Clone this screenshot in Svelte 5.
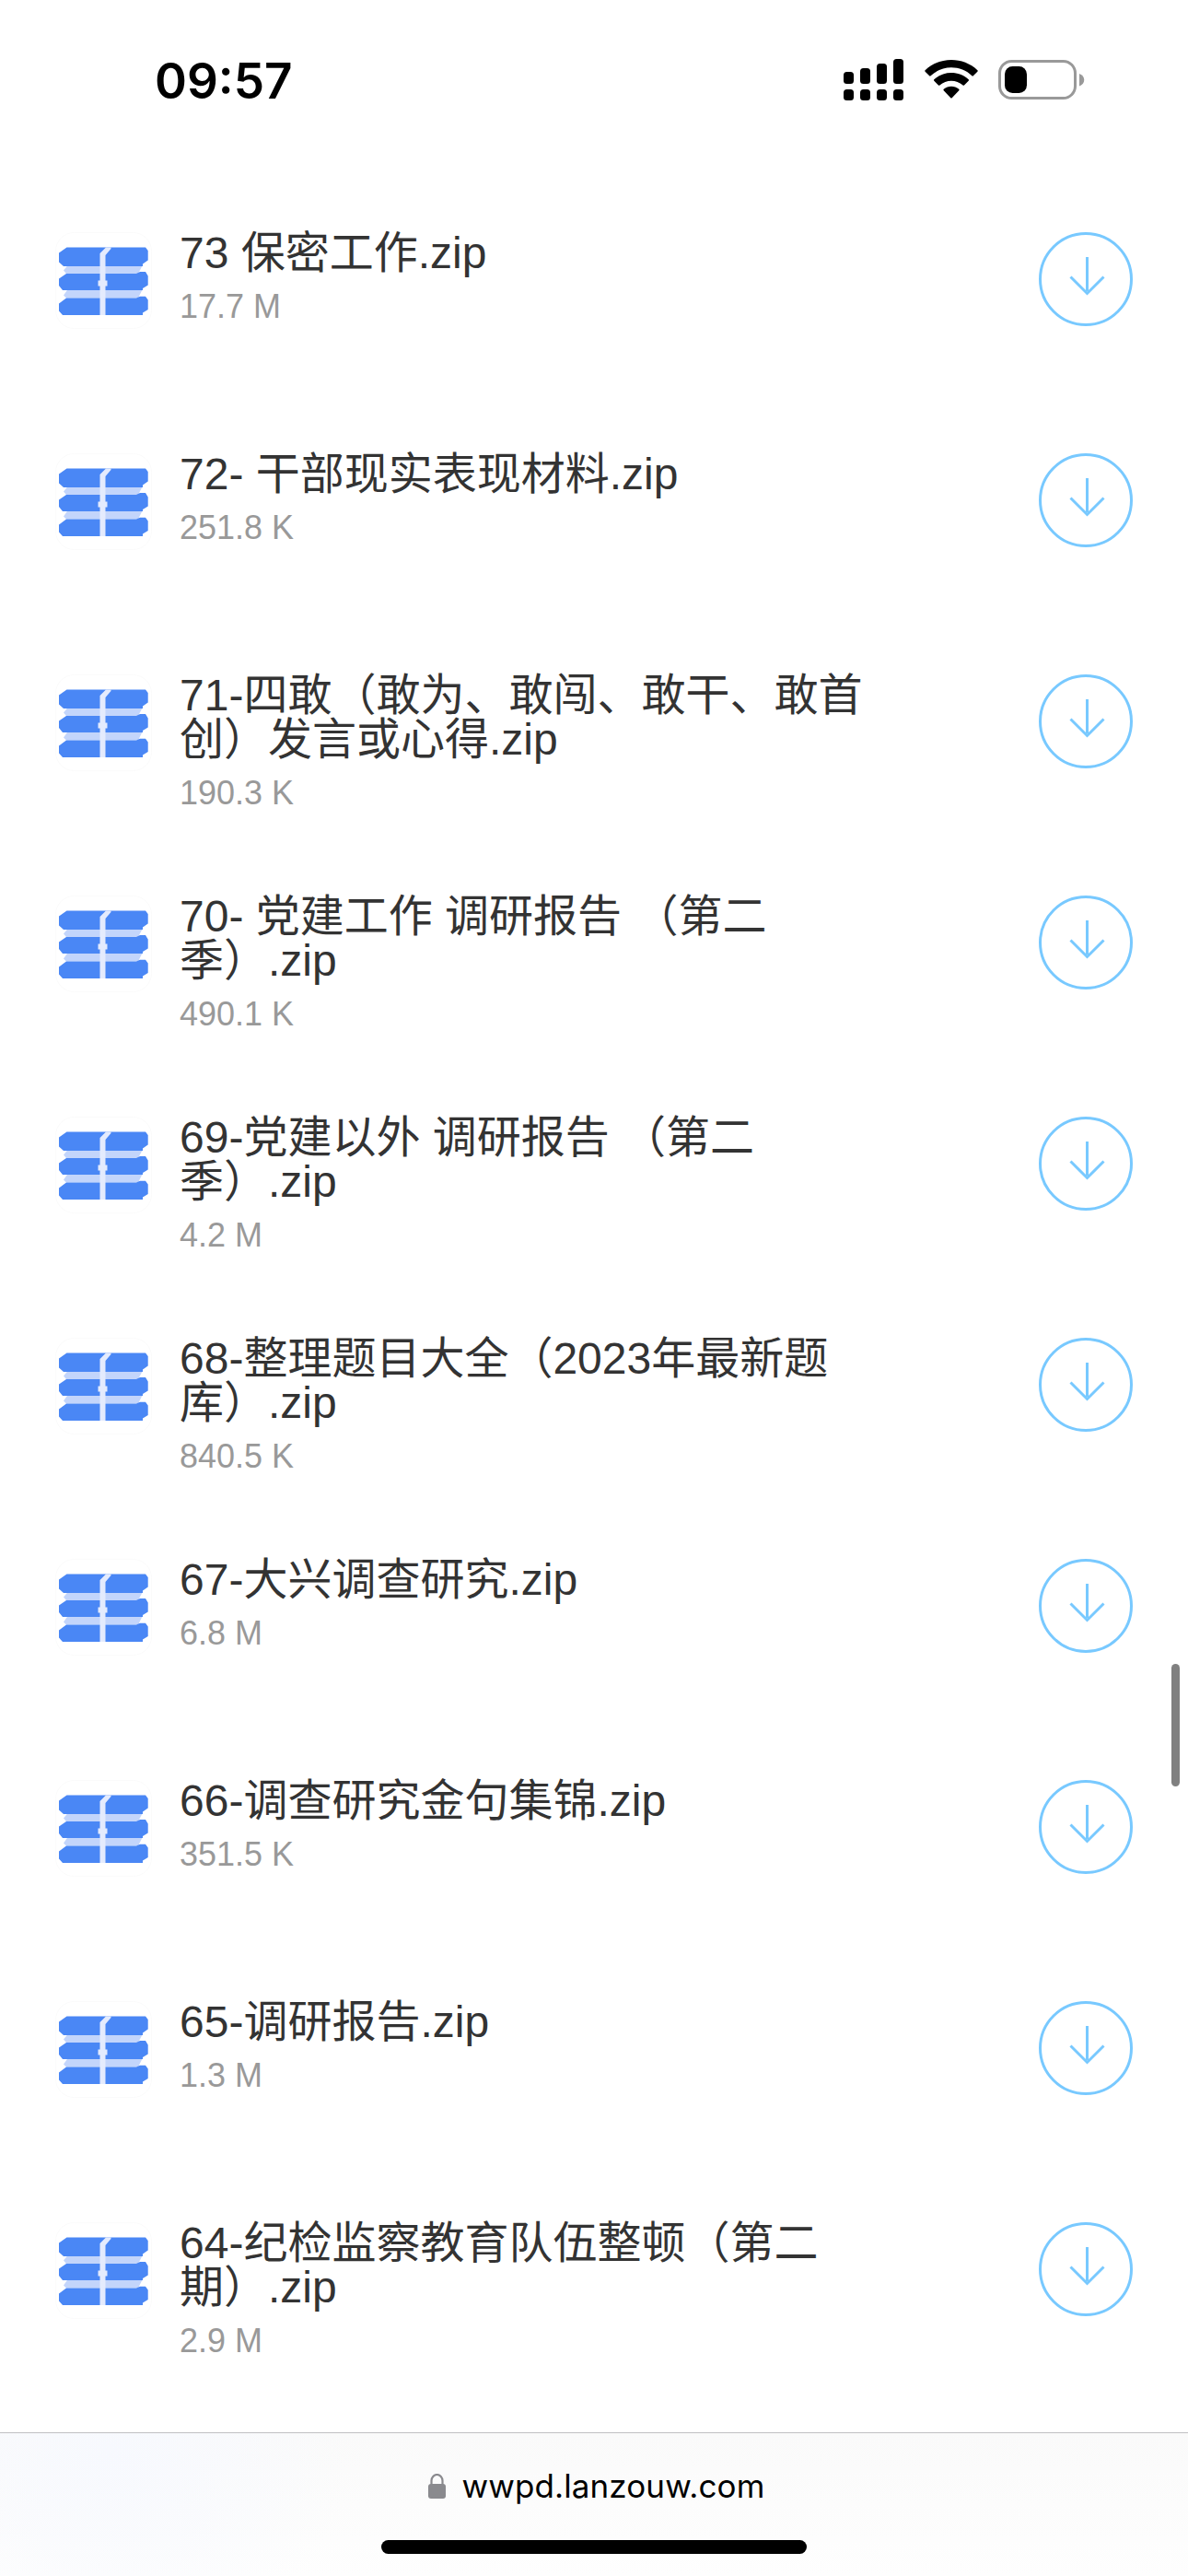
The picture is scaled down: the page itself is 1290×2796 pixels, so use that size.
<script lang="ts">
type FileItem = {
    name: string;
    size: string;
};

// "\n" marks where a long name breaks onto its second line
const files: FileItem[] = [
    { name: "73 保密工作.zip", size: "17.7 M" },
    { name: "72- 干部现实表现材料.zip", size: "251.8 K" },
    { name: "71-四敢（敢为、敢闯、敢干、敢首\n创）发言或心得.zip", size: "190.3 K" },
    { name: "70- 党建工作 调研报告 （第二\n季）.zip", size: "490.1 K" },
    { name: "69-党建以外 调研报告 （第二\n季）.zip", size: "4.2 M" },
    { name: "68-整理题目大全（2023年最新题\n库）.zip", size: "840.5 K" },
    { name: "67-大兴调查研究.zip", size: "6.8 M" },
    { name: "66-调查研究金句集锦.zip", size: "351.5 K" },
    { name: "65-调研报告.zip", size: "1.3 M" },
    { name: "64-纪检监察教育队伍整顿（第二\n期）.zip", size: "2.9 M" },
];

const signalTops = [14, 10, 5, 0];
</script>

<div class="screen">
    <header class="status">
        <span class="time">09:57</span>
        <div class="indicators">
            <svg class="signal" width="65" height="45" viewBox="0 0 65 45">
                {#each signalTops as top, i}
                    <rect x={i * 18} y={top} width="11" height={27 - top} rx="3.5" />
                    <rect x={i * 18} y="33" width="11" height="12" rx="3.5" />
                {/each}
            </svg>
            <svg class="wifi" width="58" height="43" viewBox="0 0 58 43">
                <path d="M.6 12.7a1 1 0 0 1 0-1.4C16-3.7 42-3.7 57.4 11.3a1 1 0 0 1 0 1.4l-4.6 4.6a1 1 0 0 1-1.4 0C39.5 5.3 18.5 5.3 6.6 17.3a1 1 0 0 1-1.4 0z" />
                <path d="M10.3 22.7a1 1 0 0 1 0-1.4c10.4-9.7 27-9.7 37.4 0a1 1 0 0 1 0 1.4l-4.7 4.8a1 1 0 0 1-1.4 0c-7.2-6.5-18-6.5-25.2 0a1 1 0 0 1-1.4 0z" />
                <path d="M20.7 33.2a1 1 0 0 1 0-1.4c4.8-4 11.8-4 16.6 0a1 1 0 0 1 0 1.4l-7.6 8a1 1 0 0 1-1.4 0z" />
            </svg>
            <svg class="battery" width="94" height="43" viewBox="0 0 94 43">
                <rect x="1.5" y="1.5" width="82" height="40" rx="13" fill="none" stroke="#999" stroke-width="3" />
                <rect x="7" y="7" width="24" height="29" rx="8.5" />
                <path d="M88 15v13.5c7-2.5 7-11 0-13.5z" fill="#999" />
            </svg>
        </div>
    </header>

    <ul class="files">
        {#each files as file}
            <li class="file">
                <svg class="zip" width="105" height="105" viewBox="0 0.4 105 105">
                    <rect x=".5" y=".9" width="104" height="104" rx="20" fill="none" stroke="#fbfbfb" />
                    <g fill="#c3d5fb">
                        <path d="M14 36H95L90 45.5H12L9 42z" />
                        <path d="M14 62H95L90 72H12L9 69z" />
                    </g>
                    <g fill="#4a87f5">
                        <path d="M12.5 17H98L100.7 20.5V31L95 35V37.3H9L4 33V23z" />
                        <path d="M12 45.3H88L92 43.5H98L100.7 48V58L95 61.5V63.5H8L4 58.5V51z" />
                        <path d="M12 72H88L92 70.2H98L100.7 74V84.5L95 88V90.3H8L4 86V78z" />
                    </g>
                    <path d="M48.500 90.500V59H46.500V53H48.500V23.500L55 17H60.500V18.500L54.500 25.500V53H56.500V59H54.500V90.500z" fill="#e4ebfd" />
                </svg>
                <div class="info">
                    <div class="name">{file.name}</div>
                    <div class="size">{file.size}</div>
                </div>
                <button class="download" aria-label="下载">
                    <svg width="102" height="102" viewBox="0 0 102 102" fill="none" stroke="#78c9ff" stroke-width="3">
                        <circle cx="51" cy="51" r="49.5" />
                        <path d="M52.5 27v37M34.5 48.5l18 18 18-18" />
                    </svg>
                </button>
            </li>
        {/each}
    </ul>

    <div class="scrollbar"></div>

    <footer class="toolbar">
        <div class="address">
            <svg width="19" height="27" viewBox="0 0 19 27">
                <path d="M3.5 12V7.5a6 6.5 0 0 1 12 0V12" fill="none" stroke="#8a8a8e" stroke-width="2.2" />
                <rect y="11" width="19" height="16" rx="3" fill="#8a8a8e" />
            </svg>
            <span>wwpd.lanzouw.com</span>
        </div>
        <div class="home"></div>
    </footer>
</div>

<style>
:global(body) {
    background: #fff;
}

.screen {
    position: relative;
    display: flex;
    flex-direction: column;
    width: 1290px;
    height: 2796px;
    overflow: hidden;
    background: #fff;
    font-family: "Liberation Sans", "Noto Sans CJK SC", sans-serif;
}

.status {
    display: flex;
    flex-shrink: 0;
    justify-content: space-between;
    box-sizing: border-box;
    height: 252px;
    padding: 64px 112px 0 168px;
}

.time {
    height: 46px;
    margin-top: 1px;
    font: 600 53px/46px Inter, sans-serif;
}

.indicators {
    display: flex;
    align-items: flex-start;
}

.wifi {
    margin: 1px 22px 0 23px;
}

.battery {
    margin-top: 1px;
}

.files {
    flex: 1;
    min-height: 0;
    margin: 0;
    padding: 0;
    list-style: none;
}

.file {
    display: flex;
    align-items: flex-start;
    height: 240px;
    padding: 0 60px;
}

.zip {
    flex-shrink: 0;
}

.info {
    flex: 1;
    margin: -1px 0 0 30px;
}

.name {
    color: #333;
    font-size: 48px;
    line-height: 48px;
    white-space: pre;
}

.size {
    margin-top: 16px;
    color: #999;
    font-size: 36px;
    line-height: 36px;
}

.download {
    width: 102px;
    height: 102px;
    padding: 0;
    border: 0;
    background: none;
}

.download svg {
    display: block;
}

/* floats over the right edge of the list */
.scrollbar {
    position: absolute;
    top: 1806px;
    right: 9px;
    width: 9px;
    height: 133px;
    border-radius: 5px;
    background: #808080;
}

.toolbar {
    display: flex;
    flex-direction: column;
    flex-shrink: 0;
    align-items: center;
    box-sizing: border-box;
    height: 156px;
    border-top: 1px solid #c0c0c2;
    background: radial-gradient(ellipse 260px 220px at 120px 20px, #f7f9fe, transparent),
        linear-gradient(#fafafa, #fefefe);
}

.address {
    display: flex;
    align-items: center;
    gap: 18px;
    height: 60px;
    margin-top: 27px;
    padding-left: 5px;
    color: #000;
    font: 35px/60px Inter, sans-serif;
    letter-spacing: 0.1px;
}

.home {
    width: 462px;
    height: 15px;
    margin-top: 29px;
    border-radius: 8px;
    background: #000;
}
</style>
